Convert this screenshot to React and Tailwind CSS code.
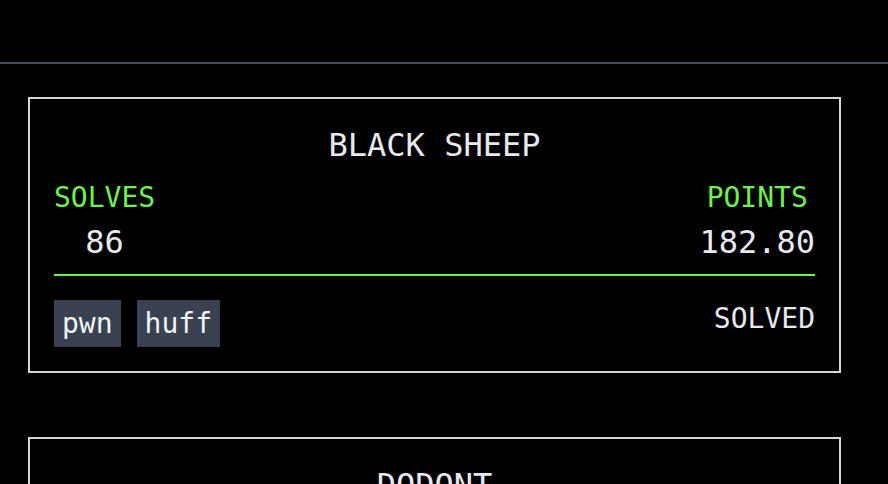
import React from 'react';

const challenges = [
  { name: 'BLACK SHEEP', solves: 86, points: '182.80', tags: ['pwn', 'huff'], solved: true },
  { name: 'DODONT', solves: 41, points: '320.00', tags: ['rev'], solved: false },
];

function ChallengeCard({ challenge }) {
  return (
    <div className="w-[813px] border-2 border-[#d4d6da] px-6 pt-[26px] pb-6">
      <h2 className="text-center text-[32px] leading-[40px] text-[#e8e9ec]">{challenge.name}</h2>

      <div className="mt-3 flex justify-between">
        <div className="flex flex-col items-center">
          <span className="text-[28px] leading-[42px] text-[#6ef24f]">SOLVES</span>
          <span className="mt-[3px] text-[32px] leading-[40px] text-[#e8e9ec]">{challenge.solves}</span>
        </div>
        <div className="flex flex-col items-center">
          <span className="text-[28px] leading-[42px] text-[#6ef24f]">POINTS</span>
          <span className="mt-[3px] text-[32px] leading-[40px] text-[#e8e9ec]">{challenge.points}</span>
        </div>
      </div>

      <div className="mt-3 h-[2px] bg-[#6ef24f]" />

      <div className="mt-6 flex items-start justify-between">
        <div className="flex gap-4">
          {challenge.tags.map((tag) => (
            <span key={tag} className="bg-[#3a4150] px-2 py-[2.5px] text-[28px] leading-[42px] text-[#f3f4f6]">
              {tag}
            </span>
          ))}
        </div>
        {challenge.solved && (
          <span className="text-[28px] leading-[38px] text-[#e8e9ec]">SOLVED</span>
        )}
      </div>
    </div>
  );
}

export default function App() {
  return (
    <div
      className="min-h-screen overflow-hidden bg-black"
      style={{ fontFamily: '"DejaVu Sans Mono", "Liberation Mono", monospace' }}
    >
      <header className="h-16 border-b-2 border-[#444b58]" />
      <main className="ml-[28px] mt-[33px] flex flex-col gap-16">
        {challenges.map((c) => (
          <ChallengeCard key={c.name} challenge={c} />
        ))}
      </main>
    </div>
  );
}
